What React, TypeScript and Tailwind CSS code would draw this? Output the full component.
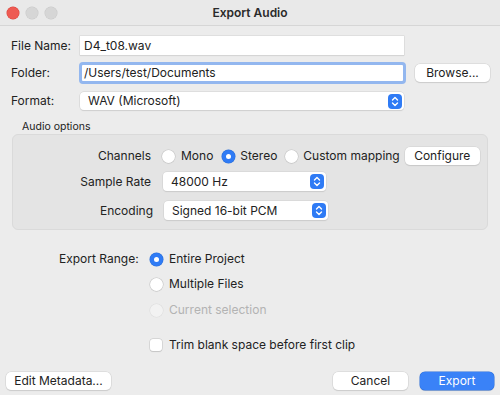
import type { ReactNode } from 'react'

const font = { fontFamily: 'Inter, "Liberation Sans", sans-serif' }

function Radio({ checked = false, disabled = false }: { checked?: boolean; disabled?: boolean }) {
  if (checked) {
    return (
      <span className="flex h-[13px] w-[13px] shrink-0 items-center justify-center rounded-full bg-[#2f7bf5] shadow-[0_0_0_0.5px_#2a6fd9]">
        <span className="h-[5px] w-[5px] rounded-full bg-white" />
      </span>
    )
  }
  return (
    <span
      className={`block h-[13px] w-[13px] shrink-0 rounded-full ${disabled
        ? 'bg-[#f2f2f2] shadow-[0_0_0_0.5px_#dcdcdc]'
        : 'bg-white shadow-[0_0_0_0.5px_#c4c4c4,0_0.5px_1px_rgba(0,0,0,0.15)]'
        }`}
    />
  )
}

function Stepper() {
  return (
    <span className="flex h-[15px] w-[14px] items-center justify-center rounded-[4px] bg-[#2f7bf5]">
      <svg width="8" height="11" viewBox="0 0 8 11" fill="none" stroke="white" strokeWidth="1.4" strokeLinecap="round" strokeLinejoin="round">
        <path d="M1.5 4 L4 1.5 L6.5 4" />
        <path d="M1.5 7 L4 9.5 L6.5 7" />
      </svg>
    </span>
  )
}

function Popup({ value, width, height = 'h-[19px]' }: { value: string; width: string; height?: string }) {
  return (
    <div className={`${width} ${height} flex items-center justify-between rounded-[4px] bg-white pl-[8px] pr-[2px] shadow-[0_0_0_0.5px_#cfcfcf,0_1px_1px_rgba(0,0,0,0.12)]`}>
      <span className="text-[12px] text-[#222]">{value}</span>
      <Stepper />
    </div>
  )
}

function Button({ children, width, primary = false }: { children: ReactNode; width: string; primary?: boolean }) {
  return (
    <div
      className={`${width} flex h-[18px] items-center justify-center rounded-[5px] text-[12px] ${primary
        ? 'bg-[#3a82f7] text-white shadow-[0_0_0_0.5px_#2d6fd8,0_1px_1px_rgba(0,0,0,0.15)]'
        : 'bg-white text-[#222] shadow-[0_0_0_0.5px_#cfcfcf,0_1px_1px_rgba(0,0,0,0.15)]'
        }`}
    >
      {children}
    </div>
  )
}

export default function App() {
  return (
    <div style={font} className="flex h-[395px] w-[500px] flex-col overflow-hidden whitespace-nowrap bg-[#ececec] text-[12px] text-[#222]">
      {/* Title bar */}
      <div className="grid h-[26px] shrink-0 grid-cols-[100px_1fr_100px] items-center border-b border-[#d6d6d6] bg-[#e9e9e9]">
        <div className="flex items-center gap-[7px] pl-[7px]">
          <span className="h-[12px] w-[12px] rounded-full bg-[#ee5a52] shadow-[0_0_0_0.5px_#d9443c]" />
          <span className="h-[12px] w-[12px] rounded-full bg-[#d6d6d6] shadow-[0_0_0_0.5px_#c8c8c8]" />
          <span className="h-[12px] w-[12px] rounded-full bg-[#d6d6d6] shadow-[0_0_0_0.5px_#c8c8c8]" />
        </div>
        <div className="text-center text-[12px] font-semibold text-[#2a2a2a]">Export Audio</div>
        <div />
      </div>

      {/* File name */}
      <div className="mt-[10px] flex h-[19px] items-center pl-[11px]">
        <span className="w-[69px]">File Name:</span>
        <div className="flex h-[19px] w-[324px] items-center bg-white pl-[4px] shadow-[0_0_0_0.5px_#d2d2d2,0_1px_1px_rgba(0,0,0,0.08)]">
          D4_t08.wav
        </div>
      </div>

      {/* Folder */}
      <div className="mt-[7px] flex h-[22px] items-center pl-[11px]">
        <span className="w-[68px]">Folder:</span>
        <div className="flex h-[22px] w-[327px] items-center rounded-[4px] border-[3px] border-[#93b7ef] bg-white pl-[2px]">
          /Users/test/Documents
        </div>
        <div className="ml-[9px]">
          <Button width="w-[75px]">Browse...</Button>
        </div>
      </div>

      {/* Format */}
      <div className="mt-[8px] flex h-[18px] items-center pl-[11px]">
        <span className="w-[69px]">Format:</span>
        <Popup value="WAV (Microsoft)" width="w-[324px]" height="h-[18px]" />
      </div>

      {/* Audio options */}
      <div className="mt-[10px] pl-[22px] text-[10.5px] leading-[14px]">Audio options</div>
      <div className="ml-[12px] flex h-[96px] w-[476px] flex-col rounded-[6px] border border-[#dadada] bg-[#e4e4e4] pt-[12px]">
        <div className="flex h-[18px] items-center">
          <span className="w-[138px] text-right">Channels</span>
          <div className="ml-[11px] flex items-center">
            <Radio />
            <span className="ml-[6px]">Mono</span>
            <span className="ml-[9px] flex"><Radio checked /></span>
            <span className="ml-[5px]">Stereo</span>
            <span className="ml-[8px] flex"><Radio /></span>
            <span className="ml-[5px]">Custom mapping</span>
            <span className="ml-[5px]"><Button width="w-[75px]">Configure</Button></span>
          </div>
        </div>
        <div className="mt-[7px] flex h-[19px] items-center">
          <span className="w-[138px] text-right">Sample Rate</span>
          <div className="ml-[12px]">
            <Popup value="48000 Hz" width="w-[163px]" />
          </div>
        </div>
        <div className="mt-[10px] flex h-[19px] items-center">
          <span className="w-[140px] text-right">Encoding</span>
          <div className="ml-[11px]">
            <Popup value="Signed 16-bit PCM" width="w-[164px]" />
          </div>
        </div>
      </div>

      {/* Export range */}
      <div className="mt-[21px] flex flex-col pl-[59px]">
        <div className="flex h-[16px] items-center">
          <span className="w-[91px]">Export Range:</span>
          <Radio checked />
          <span className="ml-[6px]">Entire Project</span>
        </div>
        <div className="mt-[9px] flex h-[16px] items-center pl-[91px]">
          <Radio />
          <span className="ml-[6px]">Multiple Files</span>
        </div>
        <div className="mt-[10px] flex h-[16px] items-center pl-[91px]">
          <Radio disabled />
          <span className="ml-[6px] text-[#b3b3b3]">Current selection</span>
        </div>
        <div className="mt-[19px] flex h-[16px] items-center pl-[91px]">
          <span className="h-[12px] w-[12px] rounded-[3px] bg-white shadow-[0_0_0_0.5px_#c4c4c4,0_0.5px_1px_rgba(0,0,0,0.15)]" />
          <span className="ml-[7px]">Trim blank space before first clip</span>
        </div>
      </div>

      {/* Bottom buttons */}
      <div className="mt-auto mb-[5px] flex items-center px-[6px]">
        <Button width="w-[105px]">Edit Metadata...</Button>
        <div className="ml-auto flex items-center gap-[12px]">
          <Button width="w-[75px]">Cancel</Button>
          <Button width="w-[74px]" primary>Export</Button>
        </div>
      </div>
    </div>
  )
}
